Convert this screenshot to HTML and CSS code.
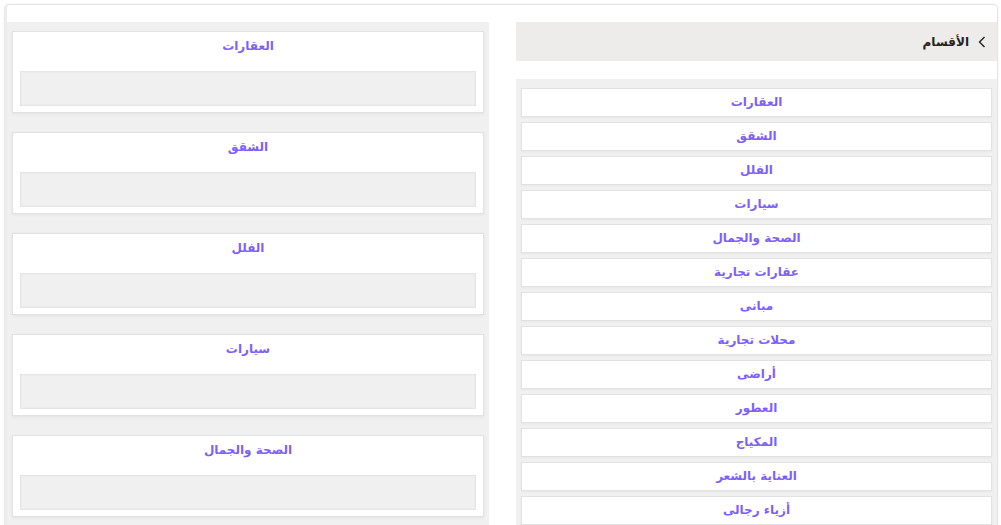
FILE: index.html
```html
<!DOCTYPE html>
<html lang="ar" dir="rtl">
<head>
  <meta charset="UTF-8" />
  <title>الأقسام</title>
  <link rel="stylesheet" href="styles.css">
</head>
<body>

<div class="page">
  <div class="layout">

    <!-- categories sidebar -->
    <aside class="sidebar">
      <div class="sidebar-head">
        <svg class="chev" viewBox="0 0 8 12" width="8" height="12">
          <path d="M6.5 1 L1.5 6 L6.5 11" fill="none" stroke="#222" stroke-width="1.4"/>
        </svg>
        <span>الأقسام</span>
      </div>
      <div class="cat-list">
        <a class="cat" href="#">العقارات</a>
        <a class="cat" href="#">الشقق</a>
        <a class="cat" href="#">الفلل</a>
        <a class="cat" href="#">سيارات</a>
        <a class="cat" href="#">الصحة والجمال</a>
        <a class="cat" href="#">عقارات تجارية</a>
        <a class="cat" href="#">مبانى</a>
        <a class="cat" href="#">محلات تجارية</a>
        <a class="cat" href="#">أراضى</a>
        <a class="cat" href="#">العطور</a>
        <a class="cat" href="#">المكياج</a>
        <a class="cat" href="#">العناية بالشعر</a>
        <a class="cat" href="#">أزياء رجالى</a>
      </div>
    </aside>

    <!-- section blocks -->
    <main class="blocks">
      <div class="block">
        <h3>العقارات</h3>
        <div class="block-body"></div>
      </div>
      <div class="block">
        <h3>الشقق</h3>
        <div class="block-body"></div>
      </div>
      <div class="block">
        <h3>الفلل</h3>
        <div class="block-body"></div>
      </div>
      <div class="block">
        <h3>سيارات</h3>
        <div class="block-body"></div>
      </div>
      <div class="block">
        <h3>الصحة والجمال</h3>
        <div class="block-body"></div>
      </div>
    </main>

  </div>
</div>

</body>
</html>
```

FILE: styles.css
```css
* {
  box-sizing: border-box;
  margin: 0;
  padding: 0;
}

html, body {
  overflow: hidden;
}

body {
  font-family: 'DejaVu Sans', 'Noto Sans', sans-serif;
  background: #fff;
  color: #333;
  padding: 4px 3px 0 4px;
}

.page {
  background: #fff;
  border: 1px solid #e4e4e4;
  border-left: 3px solid #ececec;
  border-bottom: none;
  border-radius: 5px 5px 0 0;
  padding-top: 17px;
  box-shadow: 0 0 3px rgba(0,0,0,0.05);
}

.layout {
  display: flex;
  gap: 27px;
  align-items: flex-start;
}

/* sidebar */
.sidebar {
  width: 481px;
  flex-shrink: 0;
}

.sidebar-head {
  height: 39px;
  background: #edecea;
  display: flex;
  align-items: center;
  gap: 9px;
  padding-right: 11px;
  font-size: 12px;
  font-weight: bold;
  color: #222;
}

.chev {
  display: block;
}

.cat-list {
  margin-top: 18px;
  background: #f0f0f0;
  padding: 9px 5px 10px;
  display: flex;
  flex-direction: column;
  gap: 5px;
}

.cat {
  display: block;
  height: 29px;
  line-height: 27px;
  background: #fff;
  border: 1px solid #e2e2e2;
  box-shadow: 0 1px 2px rgba(0,0,0,0.04);
  text-align: center;
  font-size: 12px;
  font-weight: bold;
  color: #7d5fff;
  text-decoration: none;
}

/* blocks */
.blocks {
  flex: 1;
  background: #f0f0f0;
  padding: 9px 5px;
  display: flex;
  flex-direction: column;
  gap: 19px;
}

.block {
  background: #fff;
  border: 1px solid #e2e2e2;
  box-shadow: 0 1px 3px rgba(0,0,0,0.06);
  padding: 4px 7px 6px 7px;
}

.block h3 {
  text-align: center;
  font-size: 12px;
  line-height: 20px;
  font-weight: bold;
  color: #7d5fff;
  margin-bottom: 15px;
}

.block-body {
  height: 35px;
  background: #f0f0f0;
  border: 1px solid #e5e5e5;
  box-shadow: inset 0 0 2px rgba(0,0,0,0.05);
}
```
